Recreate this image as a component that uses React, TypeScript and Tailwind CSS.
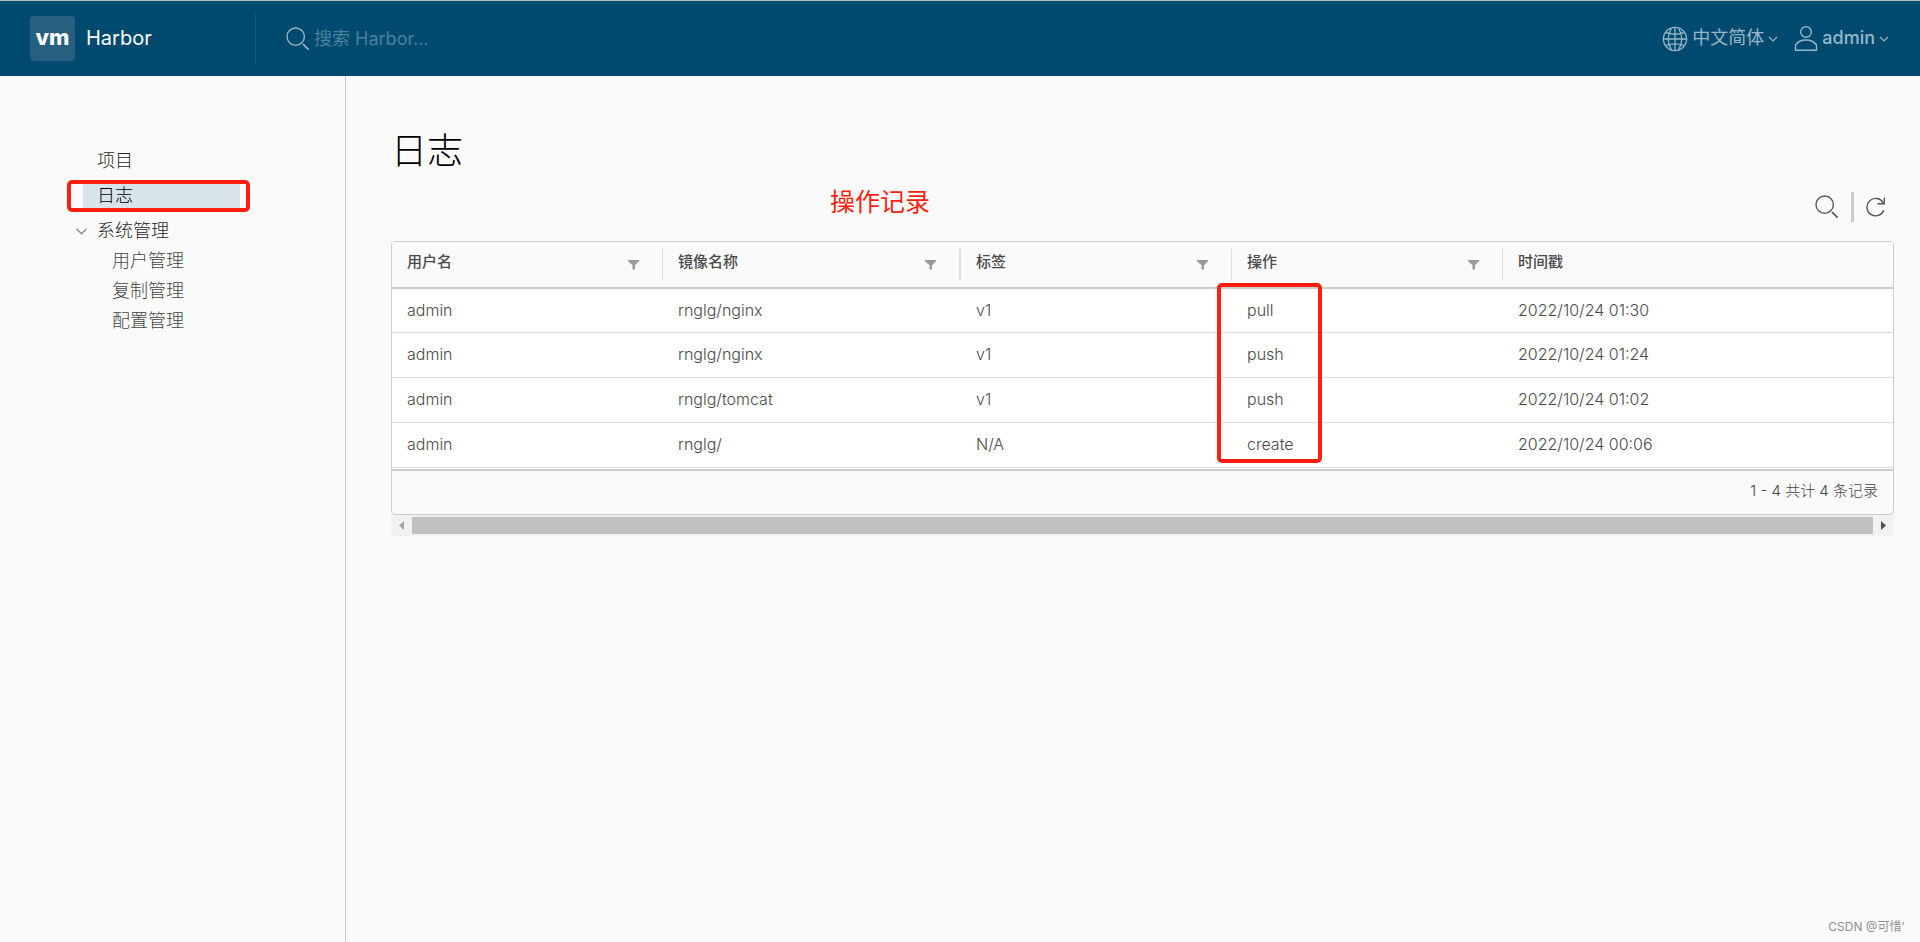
import { useState } from "react";

type LogEntry = {
  username: string;
  repository: string;
  tag: string;
  operation: string;
  timestamp: string;
};

const logs: LogEntry[] = [
  { username: "admin", repository: "rnglg/nginx", tag: "v1", operation: "pull", timestamp: "2022/10/24 01:30" },
  { username: "admin", repository: "rnglg/nginx", tag: "v1", operation: "push", timestamp: "2022/10/24 01:24" },
  { username: "admin", repository: "rnglg/tomcat", tag: "v1", operation: "push", timestamp: "2022/10/24 01:02" },
  { username: "admin", repository: "rnglg/", tag: "N/A", operation: "create", timestamp: "2022/10/24 00:06" },
];

const columns = [
  { label: "用户名", width: "w-[271px]", divider: "border-r" },
  { label: "镜像名称", width: "w-[298px]", divider: "border-r-2" },
  { label: "标签", width: "w-[271px]", divider: "border-r" },
  { label: "操作", width: "w-[271px]", divider: "border-r" },
  { label: "时间戳", width: "", divider: "" },
];

const adminLinks = ["用户管理", "复制管理", "配置管理"];

function SearchIcon() {
  return (
    <svg width="24" height="24" viewBox="0 0 24 24" fill="none" stroke="currentColor" strokeWidth="1.4" aria-hidden>
      <circle cx="9.7" cy="9.7" r="8.7" />
      <path d="M17 17.2l5.6 5.4" strokeWidth="1.7" />
    </svg>
  );
}

function GlobeIcon() {
  return (
    <svg width="26" height="26" viewBox="0 0 26 26" fill="none" stroke="currentColor" strokeWidth="1.3" aria-hidden>
      <circle cx="13" cy="13" r="11.6" />
      <path d="M13 1.5v23M1.5 13h23M4 6.7q9 3 18 0M4 19.3q9-3 18 0" />
      <path d="M9.5 2q-6.5 11 0 22M16.5 2q6.5 11 0 22" />
    </svg>
  );
}

function UserIcon() {
  return (
    <svg width="24" height="28" viewBox="0 0 24 28" fill="none" stroke="currentColor" strokeWidth="1.4" aria-hidden>
      <circle cx="12" cy="7" r="5.3" />
      <path d="M1.5 25.3V20C3.5 17 7.5 15 12 15s8.5 2 10.5 5v5.3z" />
    </svg>
  );
}

function Caret() {
  return (
    <svg width="10" height="6" viewBox="0 0 10 6" fill="none" stroke="currentColor" strokeWidth="1.2" aria-hidden>
      <path d="M1 1l4 4 4-4" />
    </svg>
  );
}

function RefreshIcon() {
  return (
    <svg width="20" height="20" viewBox="0 0 20 20" fill="none" stroke="currentColor" strokeWidth="1.4" aria-hidden>
      <path d="M17.8 13.2A8.7 8.7 0 1 1 17.2 5.8" />
      <path d="M18.3 .8v6h-6.8" />
    </svg>
  );
}

function FilterIcon() {
  return (
    <svg width="11" height="10" viewBox="0 0 11 10" fill="currentColor" aria-hidden>
      <path d="M0 0h11v1.2L7 5.3v4.2H4.5V5.3L0 1.2z" />
    </svg>
  );
}

function Header() {
  return (
    <header className="flex h-[76px] items-center border-t border-[#b5bcc0] bg-[#004a70] text-[#99b7c6]">
      <a href="#" className="flex w-[255px] items-center gap-[11px] pl-[30px] text-white">
        <span className="flex size-[45px] items-center justify-center rounded-[4px] bg-[#265f80] pb-0.5 text-[22px] font-extrabold">
          vm
        </span>
        <span className="pb-0.5 text-xl">Harbor</span>
      </a>
      <label className="flex h-[50px] flex-1 items-center gap-1 border-l border-[#195b7e] pl-[30px]">
        <SearchIcon />
        <input
          type="text"
          aria-label="搜索"
          placeholder="搜索 Harbor..."
          className="w-72 bg-transparent text-lg text-white outline-none placeholder:text-[#4d809b]"
        />
      </label>
      <div className="flex items-center gap-4 pr-[31px] text-lg">
        <button type="button" className="flex items-center gap-1">
          <GlobeIcon />
          <span className="pb-0.5">中文简体</span>
          <Caret />
        </button>
        <button type="button" className="flex items-center gap-1 font-medium">
          <UserIcon />
          <span className="pb-0.5">admin</span>
          <Caret />
        </button>
      </div>
    </header>
  );
}

function SideNav() {
  const [open, setOpen] = useState(true);

  return (
    <nav className="w-[346px] shrink-0 border-r border-[#ccc] pt-[73px] pl-[68px] text-lg/6 font-light text-[#1f1f1f]">
      <ul className="flex flex-col gap-[11px]">
        <li className="h-6">
          <a href="#" className="ml-[15px] block w-[157px] pl-[14px]">
            项目
          </a>
        </li>
        <li className="relative h-6">
          <a href="#" aria-current="page" className="ml-[15px] block w-[157px] bg-[#d9e4ea] pl-[14px] text-black">
            日志
          </a>
          <span className="pointer-events-none absolute -top-1 -left-px h-8 w-[183px] rounded-[5px] border-4 border-[#ff1f10]" />
        </li>
        <li>
          <button
            type="button"
            className="flex h-6 items-center gap-2.5 pl-2"
            aria-expanded={open}
            onClick={() => setOpen((value) => !value)}
          >
            <svg width="11" height="7" viewBox="0 0 11 7" fill="none" stroke="#8c8c8c" strokeWidth="1.4" aria-hidden>
              <path d="M.5 .8l5 5 5-5" />
            </svg>
            系统管理
          </button>
          {open && (
            <ul className="mt-1.5 flex flex-col gap-1.5 pl-11 text-[#454545]">
              {adminLinks.map((link) => (
                <li key={link} className="h-6">
                  <a href="#">{link}</a>
                </li>
              ))}
            </ul>
          )}
        </li>
      </ul>
    </nav>
  );
}

function LogTable() {
  return (
    <div className="overflow-hidden rounded-[4px] border border-[#ccc]">
      <div className="bg-white">
        <table className="w-full table-fixed border-separate border-spacing-0 text-left text-base text-[#4a4a4a]">
          <thead className="bg-[#fafafa] text-[15px]">
            <tr>
              {columns.map((column) => (
                <th key={column.label} className={`h-[47px] border-b-2 border-[#ccc] p-0 font-medium ${column.width}`}>
                  <div className={`flex h-[31px] items-center justify-between border-[#ddd] pl-[15px] ${column.divider}`}>
                    <span className="pb-1">{column.label}</span>
                    {column.divider && (
                      <button type="button" aria-label={`筛选${column.label}`} className="mr-[23px] text-[#9a9a9a]">
                        <FilterIcon />
                      </button>
                    )}
                  </div>
                </th>
              ))}
            </tr>
          </thead>
          <tbody className="font-light">
            {logs.map((log, index) => (
              <tr
                key={log.timestamp}
                className="[&>td]:h-[45px] [&>td]:border-b [&>td]:border-[#ddd] [&>td]:px-[15px] [&>td]:pb-0.5 first:[&>td]:h-[44px]"
              >
                <td>{log.username}</td>
                <td>{log.repository}</td>
                <td>{log.tag}</td>
                <td className="relative">
                  {log.operation}
                  {index === 0 && (
                    <span className="pointer-events-none absolute -top-1.5 -left-[15px] z-10 h-[180px] w-[105px] rounded-[5px] border-4 border-[#ff1f10]" />
                  )}
                </td>
                <td>{log.timestamp}</td>
              </tr>
            ))}
          </tbody>
        </table>
        <div className="h-px" />
      </div>
      <div className="flex h-[45px] items-center justify-end border-t-2 border-[#ccc] pr-[15px] pb-0.5 text-[15px] font-light text-[#454545]">
        1 - 4 共计 4 条记录
      </div>
    </div>
  );
}

function ScrollBar() {
  return (
    <div className="flex h-[21px] items-center bg-[#f1f1f1]">
      <button type="button" aria-label="向左滚动" className="flex w-[21px] justify-center text-[#a3a3a3]">
        <svg width="5" height="9" viewBox="0 0 5 9" fill="currentColor" aria-hidden>
          <path d="M5 0v9L0 4.5z" />
        </svg>
      </button>
      <div className="h-[17px] flex-1 bg-[#c1c1c1]" />
      <button type="button" aria-label="向右滚动" className="flex w-[21px] justify-center text-[#505050]">
        <svg width="5" height="9" viewBox="0 0 5 9" fill="currentColor" aria-hidden>
          <path d="M0 0v9l5-4.5z" />
        </svg>
      </button>
    </div>
  );
}

export default function App() {
  return (
    <div className="relative flex min-h-screen flex-col bg-[#fafafa] font-['Inter','Noto_Sans_CJK_SC',sans-serif]">
      <Header />
      <div className="flex flex-1">
        <SideNav />
        <main className="relative min-w-0 flex-1 pt-[55px] pr-[26px] pl-[45px]">
          <h1 className="text-4xl/10 font-extralight text-black">日志</h1>
          <p className="absolute top-[108px] left-[484px] text-[25px]/9 text-[#ff1f10]">操作记录</p>
          <div className="mt-[21px] mb-[19px] flex h-[30px] items-center justify-end gap-3 pr-2 text-[#565656]">
            <button type="button" aria-label="搜索日志">
              <SearchIcon />
            </button>
            <span className="h-full w-[3px] bg-[#ccc]" />
            <button type="button" aria-label="刷新">
              <RefreshIcon />
            </button>
          </div>
          <LogTable />
          <ScrollBar />
        </main>
      </div>
      <div className="absolute right-[15px] bottom-[7px] text-xs text-[#8f8f8f]">CSDN @可惜'</div>
    </div>
  );
}
